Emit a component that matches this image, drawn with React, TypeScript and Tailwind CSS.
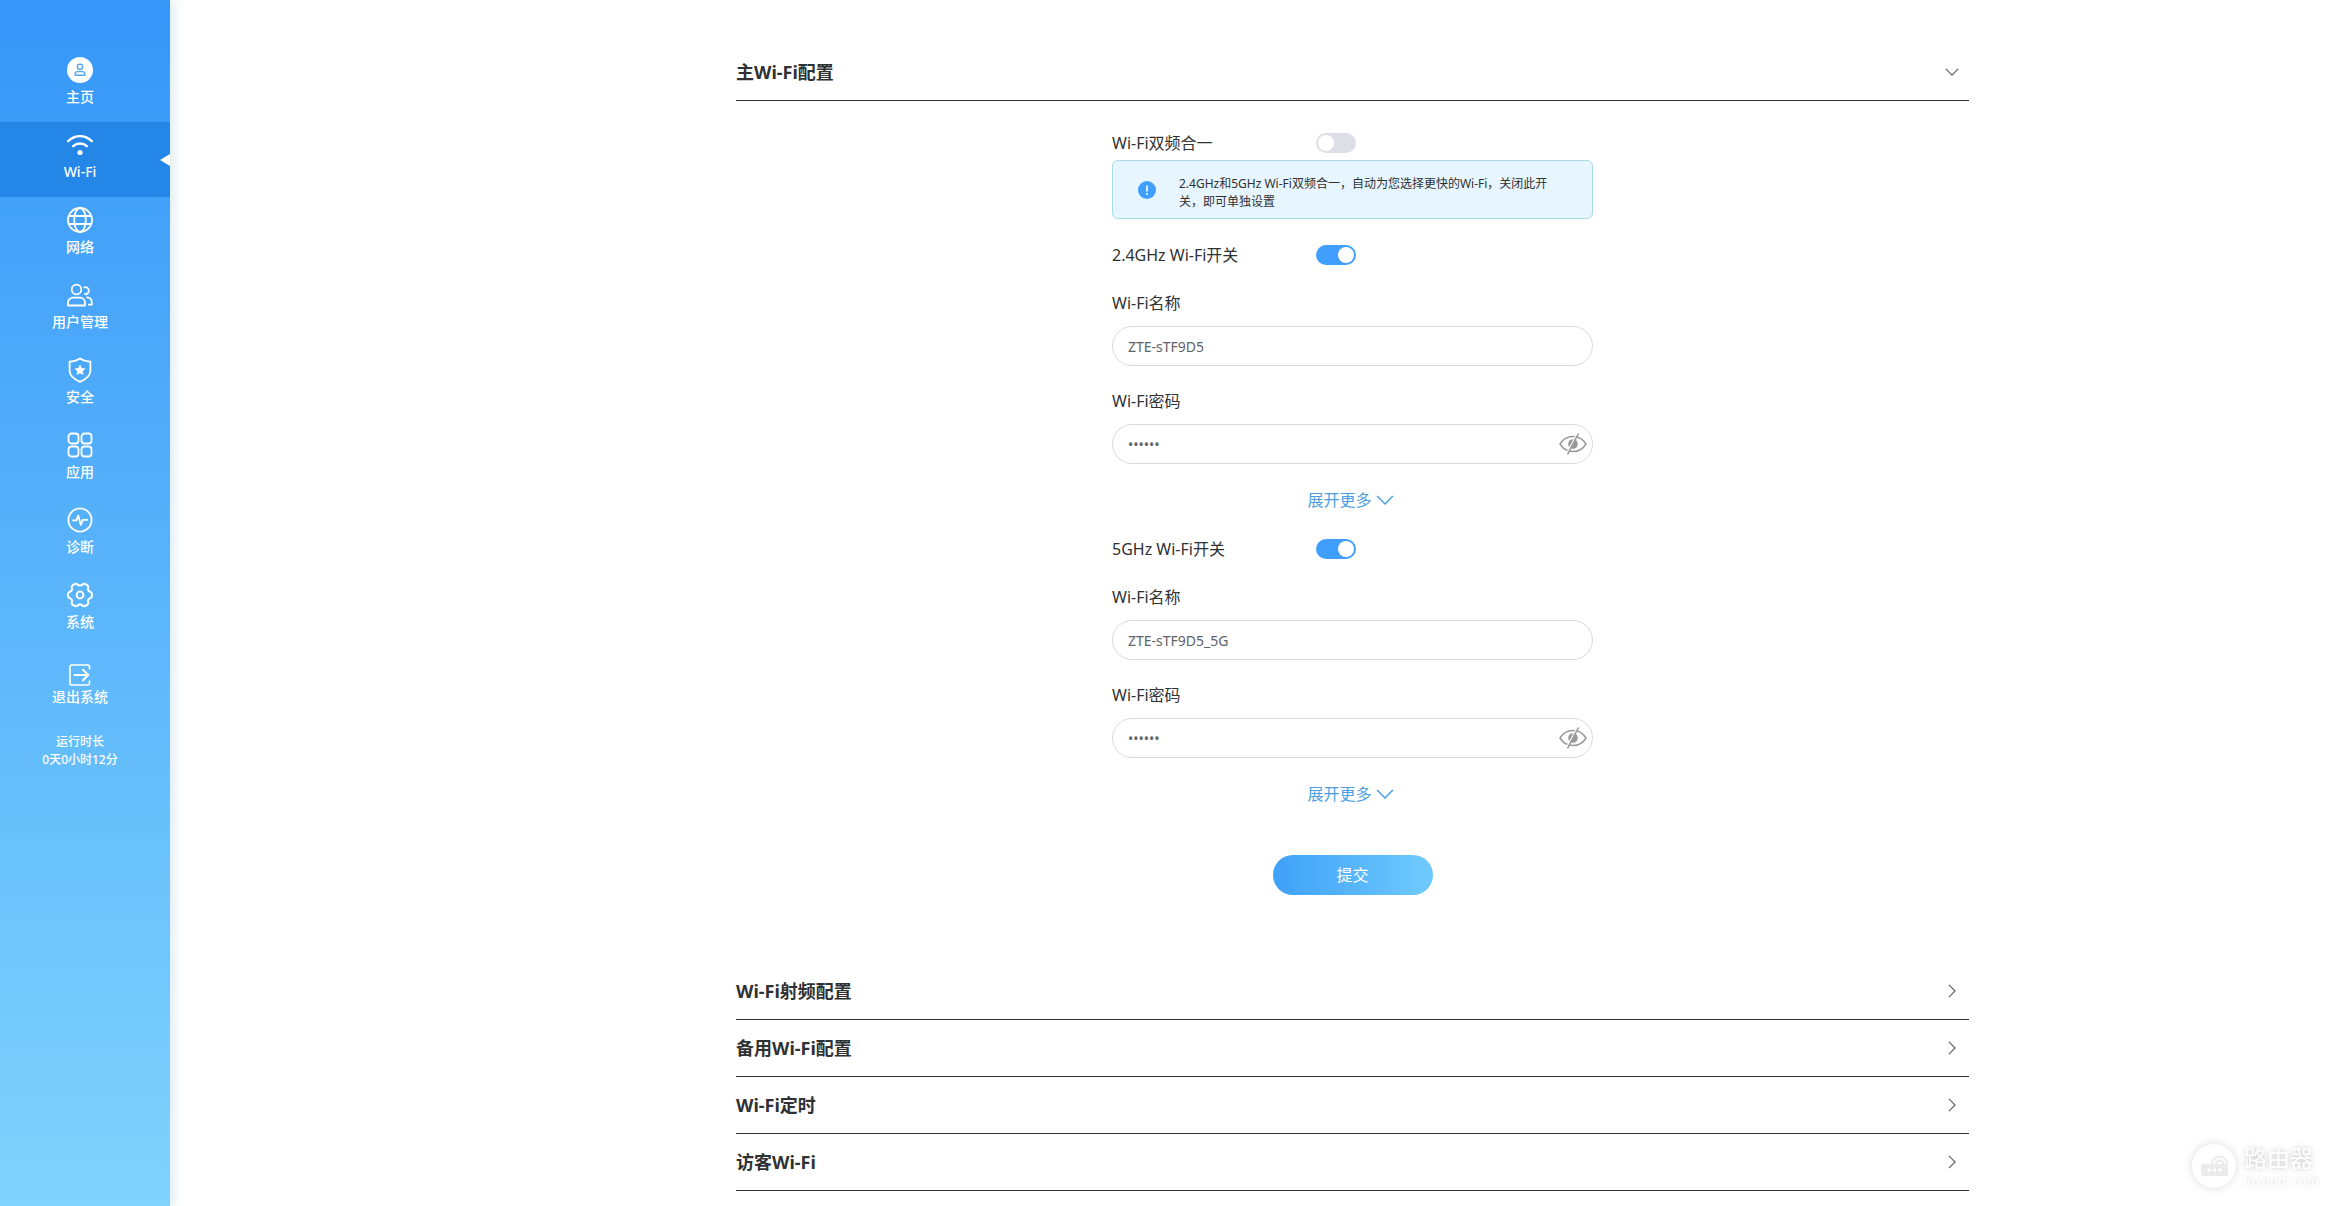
import React, { useState } from 'react';

const LINE = {
  fill: 'none',
  stroke: 'currentColor',
  strokeWidth: 1.8,
  strokeLinecap: 'round',
  strokeLinejoin: 'round',
} as const;

function HomeIcon() {
  return (
    <svg viewBox="0 0 26 26" className="w-[26px] h-[26px]" aria-hidden="true">
      <circle cx="13" cy="13" r="13" fill="white" />
      <g fill="none" stroke="#4fa6ee" strokeWidth="1.4" strokeLinejoin="round">
        <circle cx="13" cy="9.8" r="2.7" />
        <path d="M8.2 18.2v-1.2a2.4 2.4 0 0 1 2.4-2.4h4.8a2.4 2.4 0 0 1 2.4 2.4v1.2z" />
      </g>
    </svg>
  );
}

function WifiIcon() {
  return (
    <svg viewBox="0 0 26 26" className="w-[26px] h-[26px]" aria-hidden="true">
      <g {...LINE} strokeWidth={2.4}>
        <path d="M1.2 9.2C8 2.4 18 2.4 24.8 9.2" />
        <path d="M6.2 14.2c3.9-3.6 9.7-3.6 13.6 0" />
      </g>
      <circle cx="13" cy="20.5" r="2.6" fill="currentColor" />
    </svg>
  );
}

function GlobeIcon() {
  return (
    <svg viewBox="0 0 26 26" className="w-[26px] h-[26px]" aria-hidden="true">
      <g {...LINE}>
        <circle cx="13" cy="13" r="12" />
        <ellipse cx="13" cy="13" rx="5.8" ry="12" />
        <path d="M1.8 9h22.4M1.8 17h22.4" />
      </g>
    </svg>
  );
}

function UsersIcon() {
  return (
    <svg viewBox="0 0 26 26" className="w-[26px] h-[26px]" aria-hidden="true">
      <g {...LINE}>
        <circle cx="9.5" cy="7.5" r="4.8" />
        <path d="M1 23.5v-2.8a5 5 0 0 1 5-5h7a5 5 0 0 1 5 5v2.800z" />
        <path d="M17.3 5.4a3.5 3.5 0 1 1 .6 6.8" />
        <path d="M20 15.3a4.6 4.6 0 0 1 4.8 4.6v2.8h-3" />
      </g>
    </svg>
  );
}

function ShieldIcon() {
  return (
    <svg viewBox="0 0 26 26" className="w-[26px] h-[26px]" aria-hidden="true">
      <path {...LINE} d="M13 1.4c3 2.2 6.6 3 10.4 3.200v9c0 5-4 8.700-10.400 11.200C6.600 22.300 2.600 18.600 2.600 13.600v-9C6.400 4.400 10 3.600 13 1.400z" />
      <path d="M13 7.4l1.7 3.6 3.9.5-2.9 2.7.8 3.900-3.500-1.900-3.500 1.900.8-3.900-2.900-2.700 3.900-.5z" fill="currentColor" />
    </svg>
  );
}

function AppsIcon() {
  return (
    <svg viewBox="0 0 26 26" className="w-[26px] h-[26px]" aria-hidden="true">
      <g {...LINE}>
        <rect x="1.5" y="1.5" width="10" height="10" rx="3" />
        <rect x="14.5" y="1.5" width="10" height="10" rx="3" />
        <rect x="1.5" y="14.5" width="10" height="10" rx="3" />
        <rect x="14.5" y="14.5" width="10" height="10" rx="3" />
      </g>
    </svg>
  );
}

function PulseIcon() {
  return (
    <svg viewBox="0 0 26 26" className="w-[26px] h-[26px]" aria-hidden="true">
      <g {...LINE}>
        <circle cx="13" cy="13" r="11.6" />
        <path d="M6 13.4h3.2l2-4.8 2.6 9.200 2-5h4.400" />
      </g>
    </svg>
  );
}

function GearIcon() {
  return (
    <svg viewBox="0 0 26 26" className="w-[26px] h-[26px]" aria-hidden="true">
      <g {...LINE} strokeWidth={2}>
        <path d="M8.5 1.8C10 1.2 10.500 3.400 13 3.400s3-2.200 4.500-1.600c1.600.6 3.300 1.500 3.700 2.600.5 1.400-.8 2 .1 3.800s3.200 1.500 3.500 3c.2 1.200.2 2.400 0 3.600-.3 1.500-2.600 1.200-3.500 3s.4 2.400-.1 3.800c-.4 1.100-2.100 2-3.700 2.600-1.500.6-2-1.600-4.500-1.600s-3 2.200-4.500 1.600c-1.600-.6-3.300-1.500-3.700-2.600-.5-1.400.8-2-.1-3.800s-3.200-1.500-3.500-3a11 11 0 0 1 0-3.600c.3-1.500 2.600-1.200 3.500-3s-.4-2.400.1-3.800c.4-1.100 2.100-2 3.700-2.600z" />
        <circle cx="13" cy="13" r="3.4" />
      </g>
    </svg>
  );
}

function LogoutIcon() {
  return (
    <svg viewBox="0 0 22 22" className="w-[22px] h-[22px]" aria-hidden="true">
      <g {...LINE} strokeWidth={1.6}>
        <path d="M20.5 5V2.8A1.8 1.8 0 0 0 18.7 1H2.8A1.8 1.8 0 0 0 1 2.8v16.400A1.800 1.800 0 0 0 2.800 21h15.900a1.800 1.800 0 0 0 1.800-1.800V17" />
        <path d="M5.5 11h13.500M14 5.800L19.200 11 14 16.200" strokeWidth={2} />
      </g>
    </svg>
  );
}

const NAV_ITEMS = [
  { label: '主页', icon: <HomeIcon /> },
  { label: 'Wi-Fi', icon: <WifiIcon />, active: true },
  { label: '网络', icon: <GlobeIcon /> },
  { label: '用户管理', icon: <UsersIcon /> },
  { label: '安全', icon: <ShieldIcon /> },
  { label: '应用', icon: <AppsIcon /> },
  { label: '诊断', icon: <PulseIcon /> },
  { label: '系统', icon: <GearIcon /> },
];

function Sidebar() {
  return (
    <aside className="w-[170px] shrink-0 pt-[47px] text-white bg-linear-to-b from-[#3596f8] to-[#7fd3fc] shadow-[4px_0_10px_rgba(160,200,215,0.35)]">
      <nav>
        {NAV_ITEMS.map(item => (
          <a
            key={item.label}
            href="#"
            aria-current={item.active ? 'page' : undefined}
            className={`relative flex flex-col items-center gap-1 h-[75px] pt-[10px] pr-[10px] text-sm leading-5 font-medium ${item.active ? 'bg-[#2486e6]' : ''}`}
          >
            {item.icon}
            {item.label}
            {item.active && (
              <span className="absolute right-0 top-8 border-y-[6px] border-r-[10px] border-y-transparent border-r-white" />
            )}
          </a>
        ))}
        <a href="#" className="flex flex-col items-center gap-px h-[75px] pt-[17px] pr-[10px] text-sm leading-5 font-medium">
          <LogoutIcon />
          退出系统
        </a>
      </nav>
      <p className="mt-[11px] pr-[10px] text-center text-xs leading-[18px] font-medium">
        运行时长
        <br />
        0天0小时12分
      </p>
    </aside>
  );
}

function Chevron({ open, className }: { open: boolean; className: string }) {
  return (
    <svg viewBox="0 0 16 16" className={className} fill="none" stroke="currentColor" strokeWidth="1.4" aria-hidden="true">
      <path d={open ? 'M1 4.5l7 7 7-7' : 'M4.5 1l7 7-7 7'} />
    </svg>
  );
}

function SectionHeader({ title, open = false }: { title: string; open?: boolean }) {
  return (
    <h2 className="border-b border-[#303133]">
      <button
        type="button"
        aria-expanded={open}
        className="flex items-center justify-between w-full h-14 pr-[10px] text-lg font-bold text-[#303133]"
      >
        {title}
        <Chevron open={open} className="w-[14px] h-[14px] text-[#606266]" />
      </button>
    </h2>
  );
}

function ToggleRow({ id, label, defaultChecked = false }: { id: string; label: string; defaultChecked?: boolean }) {
  return (
    <div className="flex items-center h-5">
      <label htmlFor={id} className="w-[204px]">{label}</label>
      <input
        id={id}
        type="checkbox"
        role="switch"
        defaultChecked={defaultChecked}
        className="appearance-none w-10 h-5 p-0.5 rounded-full bg-[#dcdfe6] checked:bg-[#409eff] before:block before:w-4 before:h-4 before:rounded-full before:bg-white checked:before:ml-5"
      />
    </div>
  );
}

function EyeIcon() {
  return (
    <svg viewBox="0 0 28 22" className="w-7 h-[22px]" fill="none" stroke="currentColor" strokeWidth="1.5" aria-hidden="true">
      <path d="M1 11C4 6 8.5 3.5 14 3.5S24 6 27 11C24 16 19.5 18.5 14 18.500S4 16 1 11z" />
      <circle cx="14" cy="11" r="4.8" fill="currentColor" stroke="none" />
      <path d="M18 1L7 21.5" stroke="white" strokeWidth="1.4" />
      <path d="M19.5 0.5L8.5 21.5" strokeWidth="1.6" />
    </svg>
  );
}

const INPUT = 'block w-full h-10 px-[15px] border border-[#d8dadd] rounded-full bg-white text-sm text-[#606266] outline-none';

function BandForm({ id, band, name }: { id: string; band: string; name: string }) {
  const [visible, setVisible] = useState(false);

  return (
    <div>
      <ToggleRow id={`${id}-switch`} label={`${band} Wi-Fi开关`} defaultChecked />
      <label htmlFor={`${id}-name`} className="block mt-[26px] mb-[11px]">Wi-Fi名称</label>
      <input id={`${id}-name`} type="text" defaultValue={name} className={INPUT} />
      <label htmlFor={`${id}-password`} className="block mt-[23px] mb-[11px]">Wi-Fi密码</label>
      <div className="relative">
        <input
          id={`${id}-password`}
          type={visible ? 'text' : 'password'}
          defaultValue="123456"
          className={INPUT}
        />
        <button
          type="button"
          aria-label="显示密码"
          onClick={() => setVisible(!visible)}
          className="absolute right-1.5 inset-y-0 text-[#999999]"
        >
          <EyeIcon />
        </button>
      </div>
      <button type="button" className="flex items-center gap-1 mx-auto mt-6 pr-1 text-[#4a9fe0]">
        展开更多
        <Chevron open className="w-[18px] h-[18px]" />
      </button>
    </div>
  );
}

function Watermark() {
  return (
    <div className="fixed right-3 bottom-[18px] flex items-center gap-2 text-white pointer-events-none">
      <svg viewBox="0 0 44 44" className="w-11 h-11 rounded-full bg-white shadow-[0_0_10px_rgba(0,0,0,0.15)]" aria-hidden="true">
        <rect x="9" y="20" width="27" height="12" rx="2" fill="#ebebeb" />
        <g fill="none" stroke="#ebebeb" strokeWidth="2">
          <path d="M20 20a7.5 7.5 0 1 1 15 0" />
          <path d="M24 20a3.5 3.5 0 1 1 7 0" />
        </g>
        <g fill="white">
          <circle cx="17" cy="26" r="1.7" />
          <circle cx="22.5" cy="26" r="1.7" />
          <circle cx="28" cy="26" r="1.7" />
        </g>
      </svg>
      <p className="[text-shadow:0_0_5px_rgba(0,0,0,0.18),0_0_12px_rgba(0,0,0,0.12)]">
        <span className="block text-[23px] leading-7">路由器</span>
        <span className="block text-[13px] leading-4">luyouqi.com</span>
      </p>
    </div>
  );
}

export default function App() {
  return (
    <div className="flex min-h-screen bg-white text-base text-[#303133] font-['Noto_Sans','Noto_Sans_CJK_SC',sans-serif]">
      <Sidebar />
      <main className="grid flex-1 grid-cols-[566fr_1233fr_362fr] content-start pt-11">
        <div className="col-start-2">
          <SectionHeader title="主Wi-Fi配置" open />
          <form className="w-[481px] mx-auto pt-8 pb-[68px]" onSubmit={e => e.preventDefault()}>
            <ToggleRow id="dual-band" label="Wi-Fi双频合一" />
            <div className="flex items-center mt-[7px] mb-[26px] h-[59px] pl-[25px] pr-8 border border-[#a9dbe6] rounded-md bg-[#e6f5fe] text-xs leading-[18px]">
              <svg viewBox="0 0 18 18" className="w-[18px] h-[18px] mr-[23px] shrink-0" aria-hidden="true">
                <circle cx="9" cy="9" r="9" fill="#409eff" />
                <path d="M9 4.5v6" stroke="white" strokeWidth="1.6" />
                <circle cx="9" cy="13" r="1" fill="white" />
              </svg>
              <p className="pt-1.5">2.4GHz和5GHz Wi-Fi双频合一，自动为您选择更快的Wi-Fi，关闭此开关，即可单独设置</p>
            </div>
            <div className="space-y-[27px]">
              <BandForm id="band-24" band="2.4GHz" name="ZTE-sTF9D5" />
              <BandForm id="band-5" band="5GHz" name="ZTE-sTF9D5_5G" />
            </div>
            <button
              type="submit"
              className="block w-40 h-10 mx-auto mt-[49px] rounded-full bg-linear-to-r from-[#3fa0f8] to-[#6fcbfd] text-white"
            >
              提交
            </button>
          </form>
          <SectionHeader title="Wi-Fi射频配置" />
          <SectionHeader title="备用Wi-Fi配置" />
          <SectionHeader title="Wi-Fi定时" />
          <SectionHeader title="访客Wi-Fi" />
        </div>
      </main>
      <Watermark />
    </div>
  );
}
